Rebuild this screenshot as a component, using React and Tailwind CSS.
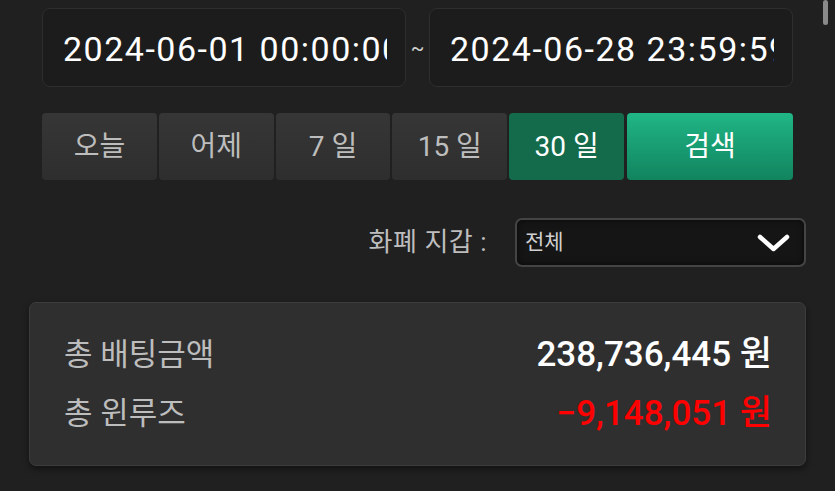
import React from "react";

const font = { fontFamily: 'Roboto, "Noto Sans CJK KR", sans-serif' };

function DateInput({ value }) {
  return (
    <div className="w-[364px] h-[79px] rounded-[8px] border border-[#2e2e2e] bg-[#1c1c1c] flex items-center pl-[20px] pr-[18px] pt-[3px] overflow-hidden">
      <div className="whitespace-nowrap overflow-hidden text-[34px] text-white leading-none tracking-[1.5px]">{value}</div>
    </div>
  );
}

function PeriodBtn({ children, active }) {
  return (
    <div
      className={
        "flex-1 h-full rounded-[4px] flex items-center justify-center text-[28px] " +
        (active
          ? "bg-[#136b4c] text-white"
          : "bg-gradient-to-b from-[#363636] to-[#2e2e2e] text-[#bdbdbd]")
      }
    >
      {children}
    </div>
  );
}

export default function App() {
  return (
    <div className="w-[835px] h-[491px] bg-[#202020] overflow-hidden relative" style={font}>
      <div className="absolute right-[7px] top-0 w-[5px] h-[25px] rounded-full bg-[#8a8a8a]" />
      <div className="px-[42px] pt-[8px]">
        <div className="flex items-center">
          <DateInput value="2024-06-01 00:00:00" />
          <div className="w-[23px] text-center text-[20px] text-[#cfcfcf] leading-none">~</div>
          <DateInput value="2024-06-28 23:59:59" />
        </div>
        <div className="mt-[26px] h-[67px] flex gap-[2px]">
          <PeriodBtn>오늘</PeriodBtn>
          <PeriodBtn>어제</PeriodBtn>
          <PeriodBtn>7 일</PeriodBtn>
          <PeriodBtn>15 일</PeriodBtn>
          <PeriodBtn active>30 일</PeriodBtn>
          <div className="ml-[1px] w-[166px] h-full rounded-[4px] bg-gradient-to-b from-[#20b686] to-[#11845e] flex items-center justify-center text-[28px] text-white">
            검색
          </div>
        </div>
      </div>
      <div className="px-[29px]">
        <div className="mt-[38px] flex items-center justify-end">
          <div className="text-[26px] text-[#bdbdbd] mr-[28px] tracking-[0.5px]">화폐 지갑 :</div>
          <div className="w-[291px] h-[49px] rounded-[7px] border-2 border-[#444] bg-[#151515] shadow-[inset_0_0_6px_rgba(0,0,0,0.6)] flex items-center justify-between pl-[8px] pr-[14px]">
            <span className="text-[21px] text-[#d0d0d0]">전체</span>
            <svg width="33" height="18" viewBox="0 0 33 18" fill="none">
              <polyline points="3,3 16.5,15 30,3" stroke="white" strokeWidth="4.5" strokeLinecap="round" strokeLinejoin="round" />
            </svg>
          </div>
        </div>
        <div className="mt-[35px] h-[164px] rounded-[7px] border border-[#3c3c3c] bg-[#2f2f2f] shadow-[0_3px_6px_rgba(0,0,0,0.45)] pl-[34px] pr-[33px] pt-[32px]">
          <div className="flex items-center justify-between h-[40px]">
            <span className="text-[31px] text-[#bdbdbd]">총 배팅금액</span>
            <span className="text-[35px] text-white font-medium">238,736,445 원</span>
          </div>
          <div className="flex items-center justify-between h-[40px] mt-[19px]">
            <span className="text-[31px] text-[#bdbdbd]">총 윈루즈</span>
            <span className="text-[35px] text-[#ff0000] font-medium">−9,148,051 원</span>
          </div>
        </div>
      </div>
    </div>
  );
}
